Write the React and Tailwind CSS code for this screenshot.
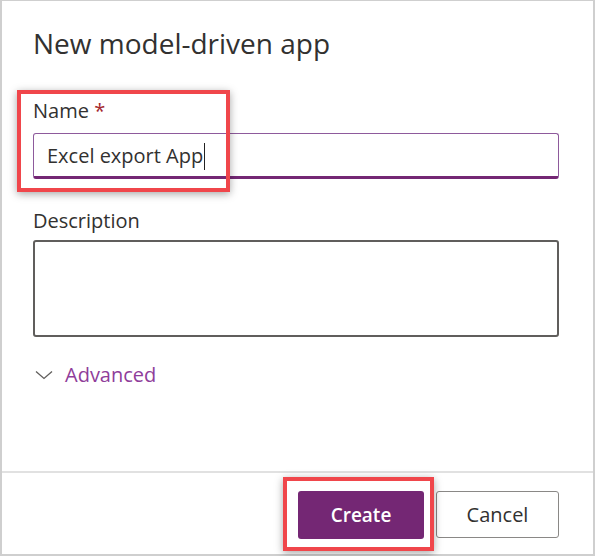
import React from "react";

export default function App() {
  const font = { fontFamily: '"Open Sans", "Noto Sans", sans-serif' };
  return (
    <div className="w-[595px] h-[556px] bg-white relative" style={font}>
      <div className="absolute inset-0 border-l-2 border-t border-r-2 border-b-2 border-[#cfcfcf] pointer-events-none" />
      <div className="flex flex-col h-full">
        <div className="h-[471px] pl-[33px] pr-[36px] flex flex-col">
          <h1 className="text-[28px] leading-none text-[#323130] mt-[29px]">New model-driven app</h1>
          <label className="text-[20px] leading-none text-[#323130] mt-[44px]">
            Name <span className="text-[#a4262c]">*</span>
          </label>
          <div className="mt-[12px] h-[46px] border border-[#8e5a9c] border-b-[3px] border-b-[#742774] rounded-[3px] flex items-center pl-[13px] pt-[2px]">
            <span className="text-[20px] text-[#323130] leading-none">Excel export App</span>
            <span className="w-px h-[27px] bg-[#222] ml-[1px]" />
          </div>
          <label className="text-[20px] leading-none text-[#323130] mt-[32px]">Description</label>
          <div className="mt-[9px] h-[97px] border-2 border-[#605e5c] rounded-[3px]" />
          <div className="mt-[28px] flex items-center gap-[12px] pl-[2px]">
            <svg width="18" height="10" viewBox="0 0 18 10" fill="none">
              <path d="M1 1.5 L9 8.5 L17 1.5" stroke="#605e5c" strokeWidth="1.3" />
            </svg>
            <span className="text-[20px] leading-none text-[#8f3d9a]">Advanced</span>
          </div>
        </div>
        <div className="border-t-2 border-[#e1e1e1] flex justify-end items-start pt-[18px] pr-[36px] gap-[12px]">
          <button className="w-[126px] h-[48px] bg-[#742774] rounded-[3px] text-white text-[19px] font-semibold" style={font}>Create</button>
          <button className="w-[123px] h-[47px] border border-[#8a8886] rounded-[3px] text-[#323130] text-[20px]" style={font}>Cancel</button>
        </div>
      </div>
      <div className="absolute left-[17px] top-[90px] w-[213px] h-[102px] border-[4px] border-[#f0464b] shadow-[0_2px_8px_rgba(0,0,0,0.35)] pointer-events-none" />
      <div className="absolute left-[283px] top-[477px] w-[151px] h-[74px] border-[4px] border-[#f0464b] shadow-[0_2px_8px_rgba(0,0,0,0.35)] pointer-events-none" />
    </div>
  );
}
